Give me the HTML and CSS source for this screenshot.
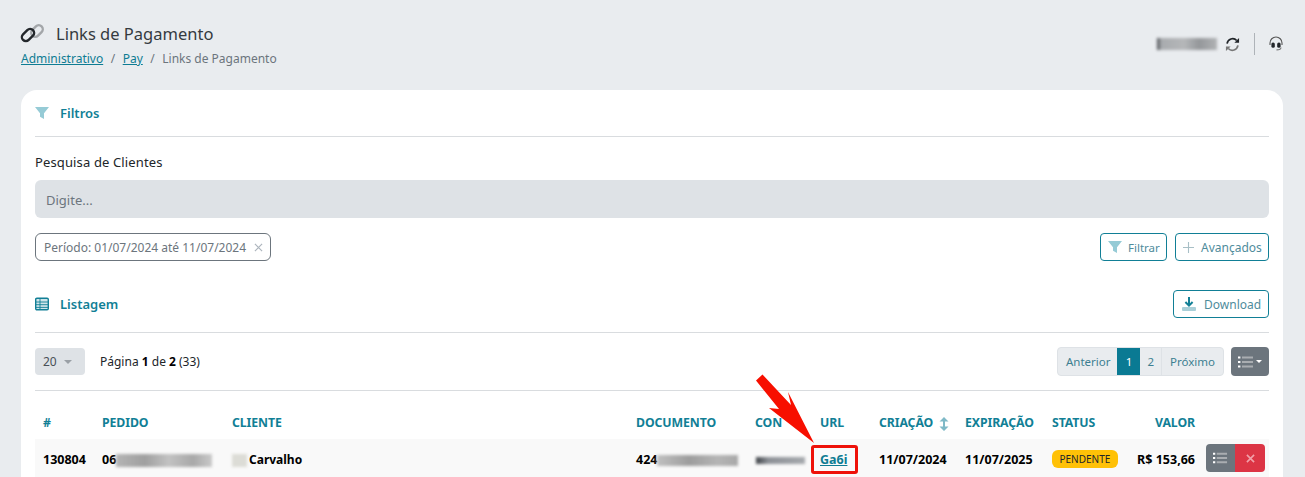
FILE: index.html
```html
<!DOCTYPE html>
<html lang="pt-BR">
<head>
<meta charset="utf-8">
<title>Links de Pagamento</title>
<link rel="stylesheet" href="styles.css">
</head>
<body>
<header class="page-head">
  <div class="head-left">
    <h1 class="title">
      <svg class="title-icon" viewBox="0 0 24 20" width="24" height="20" fill="none" stroke-width="2.400">
        <rect x="10.500" y="3" width="13" height="8" rx="4" transform="rotate(-45 17 7)" stroke="#a3a6a9"/>
        <rect x="1" y="7" width="14" height="8" rx="4" transform="rotate(-45 8 11)" stroke="#23272b"/>
      </svg>
      <span>Links de Pagamento</span>
    </h1>
    <nav class="crumbs"><a href="#">Administrativo</a><i>/</i><a href="#">Pay</a><i>/</i><span>Links de Pagamento</span></nav>
  </div>
  <div class="head-right">
    <span class="blur blur-user"></span>
    <svg class="sync" viewBox="0 0 16 16" width="15" height="15" fill="none" stroke-width="1.800">
      <path d="M2.200 7A6 6 0 0 1 12.500 3.700" stroke="#212529"/><path d="M15 1v5h-5z" fill="#212529"/>
      <path d="M13.800 9A6 6 0 0 1 3.500 12.300" stroke="#777"/><path d="M1 15v-5h5z" fill="#777"/>
    </svg>
    <span class="vline"></span>
    <svg class="headset" viewBox="0 0 16 16" width="16" height="16" fill="none">
      <path d="M2 9V7a6 6 0 0 1 12 0v2" stroke="#555" stroke-width="1.100"/>
      <rect x="3.400" y="6.400" width="3.400" height="5.400" rx="1.600" fill="#212529"/>
      <rect x="9.200" y="6.400" width="3.400" height="5.400" rx="1.600" fill="#212529"/>
      <path d="M13 11.500c0 1.600-1.500 2.400-4.500 2.400" stroke="#777" stroke-width="1.100"/>
    </svg>
  </div>
</header>

<main class="card">
  <section class="filters">
    <h2 class="section-title">
      <svg class="sec-icon" viewBox="0 0 14 12" width="14" height="12"><path d="M0 0h14L9 6.200V12L5 9.800V6.200z" fill="#96cbd6"/></svg>
      Filtros
    </h2>
    <label class="field-label" for="q">Pesquisa de Clientes</label>
    <input class="search" id="q" type="text" placeholder="Digite...">
    <div class="filter-row">
      <span class="chip">Período: 01/07/2024 até 11/07/2024
        <svg viewBox="0 0 10 10" width="9" height="9" stroke="#adb5bd" stroke-width="1.300"><path d="M1 1l8 8M9 1l-8 8"/></svg>
      </span>
      <div class="btn-group">
        <button class="btn btn-filtrar">
          <svg viewBox="0 0 14 12" width="14" height="12"><path d="M0 0h14L9 6.200V12L5 9.800V6.200z" fill="#96cbd6"/></svg>
          Filtrar
        </button>
        <button class="btn btn-adv">
          <svg viewBox="0 0 12 12" width="11" height="11" stroke="#a8bfc6" stroke-width="1.200"><path d="M6 0v12M0 6h12"/></svg>
          Avançados
        </button>
      </div>
    </div>
  </section>

  <section class="listing">
    <div class="listing-head">
      <h2 class="section-title">
        <svg class="sec-icon" viewBox="0 0 14 14" width="14" height="14">
          <rect x=".7" y="1.200" width="12.600" height="11.600" rx="1.200" fill="#cfe5ea" stroke="#117f96" stroke-width="1.400"/>
          <path d="M1 5h12M1 7.700h12M1 10.400h12M5 2v10" stroke="#117f96" stroke-width=".9"/>
        </svg>
        Listagem
      </h2>
      <button class="btn btn-download">
        <svg viewBox="0 0 14 14" width="14" height="14">
          <rect x="0" y="10" width="14" height="4" rx="1" fill="#a9cfd8"/>
          <path d="M7 0v8M3.400 5L7 8.600 10.600 5" fill="none" stroke="#117f96" stroke-width="2"/>
        </svg>
        Download
      </button>
    </div>
    <div class="pager-row">
      <div class="pager-left">
        <span class="per-page">20 <b class="caret"></b></span>
        <span class="page-info">Página <b>1</b> de <b>2</b> (33)</span>
      </div>
      <div class="pager-right">
        <ul class="pagination">
          <li class="prev">Anterior</li><li class="active">1</li><li class="num">2</li><li>Próximo</li>
        </ul>
        <button class="btn-list">
          <svg viewBox="0 0 16 12" width="16" height="12">
            <path d="M0 1.500h2.400M0 6h2.400M0 10.500h2.400" stroke="#fff" stroke-width="2"/>
            <path d="M4 1.500h11M4 6h11M4 10.500h11" stroke="#a9adb1" stroke-width="2"/>
          </svg>
          <b class="caret caret-light"></b>
        </button>
      </div>
    </div>
    <table class="grid">
      <colgroup>
        <col class="c1"><col class="c2"><col class="c3"><col class="c4"><col class="c5"><col class="c6"><col class="c7"><col class="c8"><col class="c9"><col class="c10"><col class="c11">
      </colgroup>
      <thead>
        <tr>
          <th>#</th><th>PEDIDO</th><th>CLIENTE</th><th>DOCUMENTO</th><th>CON</th><th>URL</th>
          <th>CRIAÇÃO
            <svg class="sort" viewBox="0 0 10 14" width="10" height="14"><path d="M5 1v12" stroke="#7fb9c7" stroke-width="2"/><path d="M5 0L9.500 4.500h-9zM5 14L.5 9.500h9z" fill="#7fb9c7"/></svg>
          </th>
          <th>EXPIRAÇÃO</th><th>STATUS</th><th class="right">VALOR</th><th></th>
        </tr>
      </thead>
      <tbody>
        <tr>
          <td>130804</td>
          <td class="masked">06<span class="blur blur-pedido"></span></td>
          <td class="masked name"><span class="blur blur-cliente"></span>Carvalho</td>
          <td class="masked">424<span class="blur blur-doc"></span></td>
          <td class="masked"><span class="blur blur-con"></span></td>
          <td><a class="url" href="#">Ga6i</a></td>
          <td>11/07/2024</td>
          <td>11/07/2025</td>
          <td><span class="badge">PENDENTE</span></td>
          <td class="right">R$ 153,66</td>
          <td class="actions">
            <span class="act-group">
              <span class="act act-list">
                <svg viewBox="0 0 16 12" width="15" height="12">
                  <path d="M0 1.500h2.400M0 6h2.400M0 10.500h2.400" stroke="#fff" stroke-width="2"/>
                  <path d="M4 1.500h11M4 6h11M4 10.500h11" stroke="#a9adb1" stroke-width="2"/>
                </svg>
              </span>
              <span class="act act-del">
                <svg viewBox="0 0 10 10" width="9" height="9" stroke="#f1a0a9" stroke-width="1.800"><path d="M1 1l8 8M9 1l-8 8"/></svg>
              </span>
            </span>
          </td>
        </tr>
      </tbody>
    </table>
  </section>
</main>

<div class="callout-box"></div>
<svg class="callout-arrow" viewBox="0 0 70 80" width="70" height="80">
  <path d="M12.500 4.500L41 35L38 22L64 73L19 38L29 39L6 10.500z" fill="#f70f00"/>
</svg>
</body>
</html>
```

FILE: styles.css
```css
* { box-sizing: border-box; }
html { overflow: hidden; }
body {
  margin: 0;
  height: 477px;
  overflow: hidden;
  position: relative;
  background: #e9ecef;
  color: #212529;
  font-family: "Noto Sans", "Open Sans", sans-serif;
  font-size: 12px;
}
.page-head {
  display: flex;
  justify-content: space-between;
  padding: 22px 21px 0 20px;
  height: 90px;
}
.title {
  display: flex;
  align-items: center;
  margin: 0;
  font-size: 16.500px;
  font-weight: 400;
  line-height: 24px;
  color: #343a40;
}
.title-icon { margin-right: 12px; flex-shrink: 0; }
.crumbs { margin: 3px 0 0 1px; line-height: 20px; color: #6c757d; font-size: 12px; }
.crumbs a { color: #0e7c93; text-decoration: underline; }
.crumbs i { font-style: normal; margin: 0 7.500px; }
.head-right { display: flex; align-items: center; height: 44px; }
.blur { display: inline-block; filter: blur(1.500px); vertical-align: middle; }
.blur-user {
  width: 60px;
  height: 12px;
  margin-right: 8px;
  background: linear-gradient(90deg, #44474b 0, #a8abae 7%, #b5b7b9 45%, #94979a 70%, #b0b2b4 100%);
}
.sync { margin-right: 14px; }
.vline { width: 1px; height: 22px; background: #aeb3b8; margin-right: 13px; }
.card {
  background: #fff;
  border-radius: 16px 16px 0 0;
  margin: 0 22px 0 21px;
  padding: 0 14px;
  height: 387px;
  overflow: hidden;
}
.section-title {
  display: flex;
  align-items: center;
  gap: 11px;
  margin: 0;
  font-size: 13px;
  font-weight: 600;
  color: #117f96;
}
.sec-icon { flex-shrink: 0; }
.filters > .section-title {
  height: 47px;
  border-bottom: 1px solid #d9dcdf;
}
.field-label { display: block; margin-top: 16px; line-height: 18px; font-size: 13px; letter-spacing: .13px; color: #212529; }
.search {
  display: block;
  width: 100%;
  height: 38px;
  margin-top: 9px;
  padding: 2px 11px 0;
  background: #dee2e6;
  border: 0;
  border-radius: 6px;
  font: inherit;
  font-size: 13px;
}
.search::placeholder { color: #6c757d; opacity: 1; }
.filter-row { display: flex; justify-content: space-between; align-items: center; margin-top: 15px; }
.chip {
  display: inline-flex;
  align-items: center;
  gap: 8px;
  height: 28px;
  padding: 0 7px 0 8px;
  border: 1px solid #6c757d;
  border-radius: 6px;
  color: #6c757d;
  font-size: 12px;
}
.btn-group { display: flex; gap: 8px; }
.btn {
  display: inline-flex;
  align-items: center;
  height: 28px;
  background: #fff;
  border: 1px solid #117f96;
  border-radius: 4px;
  color: #4f8c9c;
  font: inherit;
  font-size: 12px;
  padding: 0 7px;
}
.btn svg { flex-shrink: 0; }
.btn-filtrar { gap: 6px; width: 67px; font-size: 11.500px; }
.btn-adv { gap: 7px; width: 94px; }
.btn-download { gap: 8px; width: 96px; padding-left: 8px; }
.listing-head {
  display: flex;
  justify-content: space-between;
  align-items: center;
  height: 57px;
  margin-top: 15px;
  border-bottom: 1px solid #d9dcdf;
}
.pager-row {
  display: flex;
  justify-content: space-between;
  align-items: center;
  height: 58px;
  border-bottom: 1px solid #d9dcdf;
}
.pager-left, .pager-right { display: flex; align-items: center; }
.per-page {
  display: inline-flex;
  align-items: center;
  gap: 7px;
  width: 50px;
  height: 27px;
  padding-left: 8px;
  background: #dee2e6;
  border-radius: 4px;
  color: #495057;
}
.caret {
  display: inline-block;
  width: 0;
  height: 0;
  border-left: 4.500px solid transparent;
  border-right: 4.500px solid transparent;
  border-top: 4.500px solid #9aa0a6;
}
.caret-light { border-top-color: #fff; border-left-width: 3.500px; border-right-width: 3.500px; border-top-width: 3.500px; }
.page-info { margin-left: 15px; color: #212529; font-size: 12px; }
.page-info b { color: #000; font-weight: 700; font-size: 12px; }
.pagination {
  display: flex;
  list-style: none;
  margin: 0;
  padding: 0;
  height: 29px;
  background: #e9ecef;
  border: 1px solid #dee2e6;
  border-radius: 4px;
  overflow: hidden;
  color: #3d7f91;
  font-size: 11.500px;
}
.pagination li { display: flex; align-items: center; justify-content: center; padding: 0 8px; border-right: 1px solid #dee2e6; }
.pagination li:last-child { border-right: 0; }
.pagination .prev { padding-right: 7px; border-right: 0; }
.pagination .num { padding: 0 7px; }
.pagination .active { background: #0a7a93; color: #fff; width: 23px; padding: 0; border-right: 0; }
.btn-list {
  display: flex;
  align-items: center;
  justify-content: center;
  gap: 2px;
  width: 38px;
  height: 29px;
  margin-left: 7px;
  padding: 0;
  background: #6c757d;
  border: 0;
  border-radius: 4px;
}
.grid { width: 1234px; table-layout: fixed; border-collapse: collapse; }
.c1 { width: 59px; } .c2 { width: 130px; } .c3 { width: 404px; } .c4 { width: 119px; }
.c5 { width: 65px; } .c6 { width: 59px; } .c7 { width: 86px; } .c8 { width: 87px; }
.c9 { width: 85px; } .c10 { width: 77px; } .c11 { width: 63px; }
.grid th {
  height: 48px;
  padding: 15px 0 0 8px;
  color: #117f96;
  font-size: 12.300px;
  font-weight: 700;
  text-align: left;
  white-space: nowrap;
  letter-spacing: -.1px;
}
.grid td {
  height: 40px;
  padding: 0 0 0 8px;
  background: #f9f9f9;
  color: #000;
  font-size: 12.500px;
  font-weight: 700;
  white-space: nowrap;
}
.grid td.name { font-size: 12px; }
.grid .right { text-align: right; padding: 0 11px 0 0; }
.grid th.right { padding-top: 15px; }
.sort { vertical-align: middle; margin-left: 3px; }
.masked { overflow: hidden; }
.blur-pedido {
  width: 96px;
  height: 13px;
  background: linear-gradient(90deg, #b5b5b5, #9f9f9f 30%, #c2c2c2 55%, #a8a8a8 80%, #c9c9c9);
}
.blur-cliente { width: 15px; height: 13px; margin-right: 2px; background: #dcdcd6; }
.blur-doc {
  width: 81px;
  height: 11px;
  background: linear-gradient(90deg, #c0c0c0, #9d9d9d 40%, #b5b5b5 75%, #a8a8a8);
}
.blur-con {
  width: 49px;
  height: 7px;
  margin-left: 1px;
  background: linear-gradient(90deg, #3f4348, #8c9096 25%, #a6a9ad);
}
.url { color: #0e7c93; text-decoration: underline; }
.badge {
  display: inline-block;
  height: 18px;
  padding: 0 7.500px;
  background: #ffc107;
  border-radius: 6px;
  color: #212529;
  font-size: 10px;
  font-weight: 400;
  line-height: 18px;
  vertical-align: 2px;
}
.grid td.actions { padding: 0; }
.act-group { display: flex; width: 59px; height: 28px; margin-top: -2px; border-radius: 4px; overflow: hidden; }
.act { display: flex; align-items: center; justify-content: center; }
.act-list { width: 29px; background: #6c757d; }
.act-del { width: 30px; background: #dc3545; }
.callout-box {
  position: absolute;
  left: 811px;
  top: 445px;
  width: 47px;
  height: 29px;
  border: 3px solid #ee1109;
  border-radius: 3px;
}
.callout-arrow { position: absolute; left: 750px; top: 370px; }
```
